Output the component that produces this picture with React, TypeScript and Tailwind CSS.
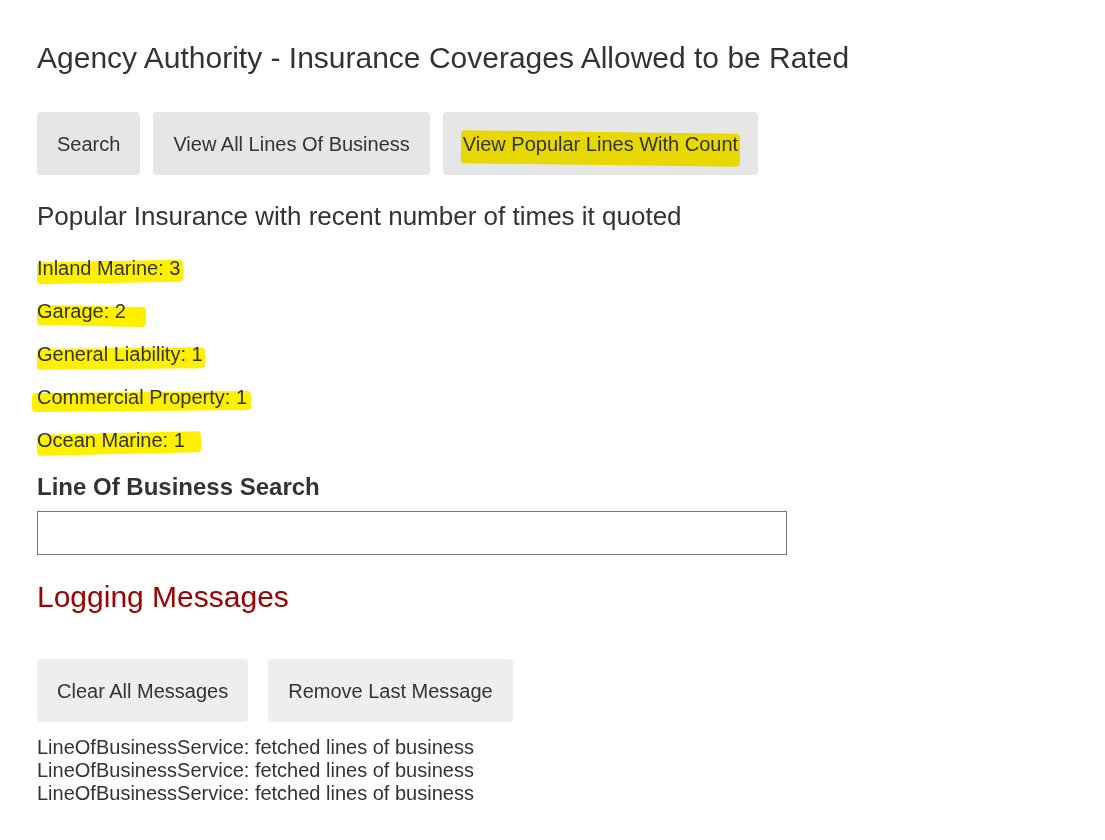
import React from "react";

function Hl({ children, className }: { children: React.ReactNode; className: string }) {
  return (
    <span className="relative inline-block">
      <span className={"absolute bg-[#fff000] mix-blend-multiply " + className} />
      <span className="relative">{children}</span>
    </span>
  );
}

export default function App() {
  const items: [string, string][] = [
    ["Inland Marine: 3", "left-0 right-[-3px] top-[4px] bottom-[-3px] -rotate-1 rounded-sm"],
    ["Garage: 2", "left-0 right-[-20px] top-[6px] bottom-[-3px] rotate-[1deg] rounded-sm"],
    ["General Liability: 1", "left-0 right-[-2px] top-[5px] bottom-[-3px] -rotate-[0.6deg] rounded-sm"],
    ["Commercial Property: 1", "left-[-5px] right-[-4px] top-[6px] bottom-[-2px] -rotate-[0.5deg] rounded-sm"],
    ["Ocean Marine: 1", "left-0 right-[-16px] top-[4px] bottom-[-2px] -rotate-[1.2deg] rounded-sm"],
  ];
  return (
    <div
      className="min-h-[840px] bg-white pl-[37px] pt-[40px] text-[#333333]"
      style={{ fontFamily: '"Liberation Sans", Arial, sans-serif' }}
    >
      <h1 className="text-[30px] leading-[36px]">
        Agency Authority - Insurance Coverages Allowed to be Rated
      </h1>
      <div className="mt-[36px] flex gap-[13px]">
        <button className="h-[63px] rounded-[4px] bg-[#e6e6e6] px-[20px] text-[20px]">Search</button>
        <button className="h-[63px] rounded-[4px] bg-[#e6e6e6] px-[20px] text-[20px]">
          View All Lines Of Business
        </button>
        <button className="h-[63px] rounded-[4px] bg-[#e6e6e6] px-[20px] text-[20px]">
          <Hl className="left-[-2px] right-[-2px] top-[3px] bottom-[-6px] rotate-[0.7deg] rounded-sm">
            View Popular Lines With Count
          </Hl>
        </button>
      </div>
      <h2 className="mt-[26px] text-[26px] leading-[30px]">
        Popular Insurance with recent number of times it quoted
      </h2>
      <div className="mt-[26px] flex flex-col gap-[20px] text-[20px] leading-[23px]">
        {items.map(([t, c]) => (
          <div key={t}>
            <Hl className={c}>{t}</Hl>
          </div>
        ))}
      </div>
      <label className="mt-[22px] block text-[24px] font-bold leading-[26px]">Line Of Business Search</label>
      <input className="mt-[11px] block h-[44px] w-[750px] border border-[#767676] px-2 text-[18px] outline-none" />
      <h2 className="mt-[24px] text-[30px] leading-[36px] text-[#a00000]">Logging Messages</h2>
      <div className="mt-[44px] flex gap-[20px]">
        <button className="h-[63px] rounded-[4px] bg-[#eeeeee] px-[20px] text-[20px]">Clear All Messages</button>
        <button className="h-[63px] rounded-[4px] bg-[#eeeeee] px-[20px] text-[20px]">Remove Last Message</button>
      </div>
      <div className="mt-[14px] text-[20px] leading-[23px]">
        <div>LineOfBusinessService: fetched lines of business</div>
        <div>LineOfBusinessService: fetched lines of business</div>
        <div>LineOfBusinessService: fetched lines of business</div>
      </div>
    </div>
  );
}
